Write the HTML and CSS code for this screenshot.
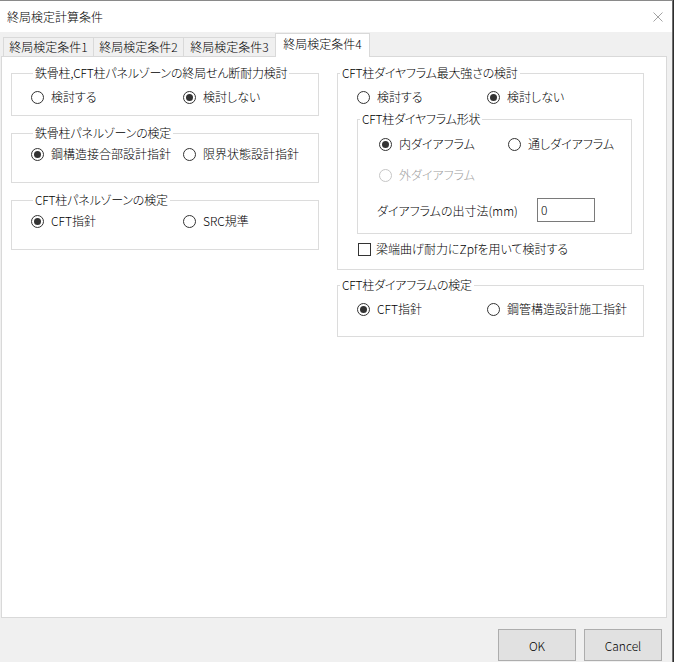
FILE: index.html
```html
<!DOCTYPE html>
<html lang="ja">
<head>
<meta charset="utf-8">
<title>終局検定計算条件</title>
<link rel="stylesheet" href="styles.css">
</head>
<body>
<div class="window">
  <div class="titlebar">
    <span class="title">終局検定計算条件</span>
    <svg class="close" width="10" height="10" viewBox="0 0 10 10"><path d="M0.5 0.5L9.5 9.5M9.5 0.5L0.5 9.5" stroke="#a3a3a3" stroke-width="1" fill="none"/></svg>
  </div>
  <div class="tabs">
    <div class="tab">終局検定条件1</div>
    <div class="tab">終局検定条件2</div>
    <div class="tab tab3">終局検定条件3</div>
    <div class="tab active">終局検定条件4</div>
  </div>
  <div class="panel">
    <div class="col col-left">
      <fieldset class="group g-l1">
        <legend>鉄骨柱,CFT柱パネルゾーンの終局せん断耐力検討</legend>
        <div class="row">
          <label class="opt opt-l"><span class="radio"></span>検討する</label>
          <label class="opt"><span class="radio on"></span>検討しない</label>
        </div>
      </fieldset>
      <fieldset class="group g-l2">
        <legend>鉄骨柱パネルゾーンの検定</legend>
        <div class="row">
          <label class="opt opt-l"><span class="radio on"></span>鋼構造接合部設計指針</label>
          <label class="opt"><span class="radio"></span>限界状態設計指針</label>
        </div>
      </fieldset>
      <fieldset class="group g-l2">
        <legend>CFT柱パネルゾーンの検定</legend>
        <div class="row">
          <label class="opt opt-l"><span class="radio on"></span>CFT指針</label>
          <label class="opt"><span class="radio"></span>SRC規準</label>
        </div>
      </fieldset>
    </div>
    <div class="col col-right">
      <fieldset class="group g-ra">
        <legend>CFT柱ダイヤフラム最大強さの検討</legend>
        <div class="row row-r">
          <label class="opt opt-r"><span class="radio"></span>検討する</label>
          <label class="opt"><span class="radio on"></span>検討しない</label>
        </div>
        <fieldset class="group g-inner">
          <legend>CFT柱ダイヤフラム形状</legend>
          <div class="row row-in">
            <label class="opt opt-in"><span class="radio on"></span>内ダイアフラム</label>
            <label class="opt"><span class="radio"></span>通しダイアフラム</label>
          </div>
          <div class="row row-in row-gap">
            <label class="opt disabled"><span class="radio"></span>外ダイアフラム</label>
          </div>
          <div class="row row-text">
            <span class="field-label">ダイアフラムの出寸法(mm)</span>
            <span class="input">0</span>
          </div>
        </fieldset>
        <div class="row row-check">
          <label class="opt"><span class="check"></span>梁端曲げ耐力にZpfを用いて検討する</label>
        </div>
      </fieldset>
      <fieldset class="group g-rb">
        <legend>CFT柱ダイアフラムの検定</legend>
        <div class="row row-r">
          <label class="opt opt-r"><span class="radio on"></span>CFT指針</label>
          <label class="opt"><span class="radio"></span>鋼管構造設計施工指針</label>
        </div>
      </fieldset>
    </div>
  </div>
  <div class="buttons">
    <button class="btn">OK</button>
    <button class="btn">Cancel</button>
  </div>
</div>
</body>
</html>
```
FILE: styles.css
```css
* { box-sizing: border-box; }
body {
  margin: 0;
  background: #2e2e2e;
  font-family: "Noto Sans CJK JP", "Noto Sans", sans-serif;
  font-size: 12px;
  font-weight: 300;
  color: #000;
}
.window {
  width: 673px;
  height: 662px;
  background: #f0f0f0;
  border-top: 1px solid #8a8a8a;
  border-right: 1px solid #6e6e6e;
  display: flex;
  flex-direction: column;
  overflow: hidden;
  font-feature-settings: "palt";
}
.titlebar {
  height: 31px;
  flex: none;
  background: #fff;
  display: flex;
  align-items: center;
  justify-content: space-between;
  padding: 0 9px 0 7px;
}
.title { line-height: 16px; }
.close { display: block; }
.tabs {
  height: 24px;
  flex: none;
  display: flex;
  align-items: flex-end;
  padding-left: 3px;
}
.tab {
  width: 91px;
  height: 19px;
  line-height: 18px;
  border: 1px solid #d9d9d9;
  border-bottom: none;
  padding: 0;
  text-align: center;
  margin-right: -1px;
  background: #f0f0f0;
  white-space: nowrap;
}
.tab3 { width: 93px; }
.tab.active {
  width: 95px;
  height: 24px;
  line-height: 20px;
  background: #fff;
  position: relative;
  z-index: 1;
  margin-bottom: -1px;
}
.panel {
  flex: none;
  margin-left: 1px;
  width: 666px;
  height: 562px;
  border: 1px solid #d9d9d9;
  background: #fff;
  display: flex;
  gap: 18px;
  padding: 8px 0 0 9px;
}
.col { display: flex; flex-direction: column; }
.col-left { width: 308px; }
.col-right { width: 307px; }
.group {
  margin: 0;
  border: 1px solid #dcdcdc;
  padding: 0;
  min-width: 0;
}
.group legend {
  line-height: 16px;
  padding: 0 2px;
  margin-left: 2px;
  white-space: nowrap;
  letter-spacing: -0.2px;
}
.row { display: flex; align-items: center; height: 16px; }
.opt { display: flex; align-items: center; line-height: 16px; white-space: nowrap; }
.radio {
  width: 13px;
  height: 13px;
  border: 1px solid #333;
  border-radius: 50%;
  background: #fff;
  margin-right: 7px;
  display: flex;
  align-items: center;
  justify-content: center;
  flex: none;
}
.radio.on::after {
  content: "";
  width: 7px;
  height: 7px;
  border-radius: 50%;
  background: #333;
}
.disabled { color: #a0a0a0; }
.disabled .radio { border-color: #c6c6c6; }
.check {
  width: 13px;
  height: 13px;
  border: 1px solid #333;
  background: #fff;
  margin-right: 5px;
  flex: none;
}
.g-l1 { padding: 8px 0 10px 19px; }
.g-l2 { margin-top: 9px; padding: 5px 0 20px 19px; }
.opt-l { width: 152px; }
.g-ra { padding: 8px 0 12px 0; }
.row-r { padding-left: 19px; }
.opt-r { width: 130px; }
.g-inner { margin: 6px 11px 0 19px; padding: 9px 0 11px 0; }
.row-in { padding-left: 21px; }
.opt-in { width: 129px; }
.row-gap { margin-top: 15px; }
.row-text { height: 24px; margin-top: 15px; padding-left: 19px; }
.field-label { width: 160px; }
.input {
  width: 58px;
  height: 24px;
  border: 1px solid #7a7a7a;
  background: #fff;
  padding-left: 3px;
  line-height: 22px;
}
.row-check { margin-top: 7px; padding-left: 20px; }
.g-rb { margin-top: 7px; padding: 8px 0 19px 0; }
.buttons {
  flex: none;
  display: flex;
  justify-content: flex-end;
  gap: 8px;
  padding: 11px 10px 0 0;
}
.btn {
  width: 78px;
  height: 32px;
  border: 1px solid #adadad;
  background: #e1e1e1;
  font-family: "Noto Sans CJK JP", "Noto Sans", sans-serif;
  font-size: 12px;
  font-weight: 300;
  color: #000;
  padding: 0;
}
```
